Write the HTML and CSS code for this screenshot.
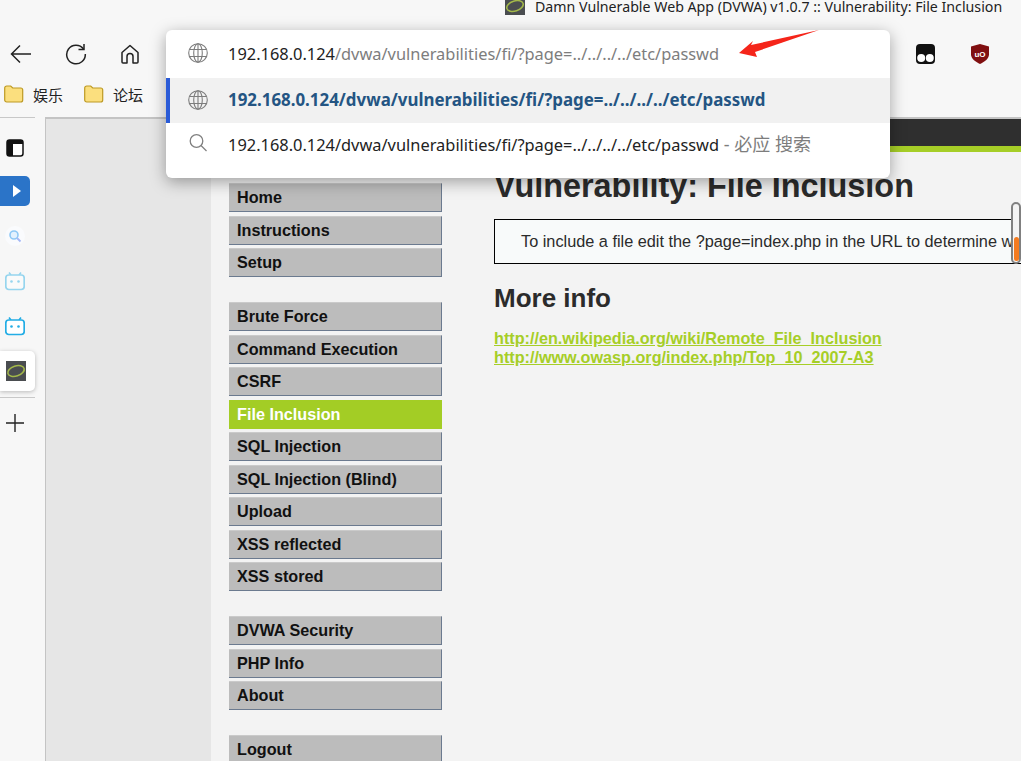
FILE: index.html
```html
<!DOCTYPE html>
<html>
<head>
<title>Damn Vulnerable Web App (DVWA) v1.0.7 :: Vulnerability: File Inclusion</title>
<link rel="stylesheet" href="styles.css">
</head>
<body>

  <div class="titlebar">
    <svg class="favicon-small" width="20" height="15" viewBox="0 5 20 15"><rect width="20" height="20" fill="#4a4d50"/><ellipse cx="10" cy="11" rx="8.5" ry="5" transform="rotate(-18 10 11)" fill="none" stroke="#a3b84a" stroke-width="1.6"/></svg>
    <span class="title-text">Damn Vulnerable Web App (DVWA) v1.0.7 :: Vulnerability: File Inclusion</span>
  </div>

  <div class="toolbar">
    <div class="nav-icons">
      <svg width="22" height="22" viewBox="0 0 22 22" fill="none" stroke="#222" stroke-width="1.5"><path d="M21 11H1.5M10 2.5L1.5 11l8.5 8.5"/></svg>
      <svg width="22" height="22" viewBox="0 0 22 22" fill="none" stroke="#222" stroke-width="1.5"><path d="M18.5 6A9.3 9.3 0 1 0 20.3 11"/><path d="M19 1v5.5h-5.5"/></svg>
      <svg width="20" height="20" viewBox="0 0 20 20" fill="none" stroke="#222" stroke-width="1.5" stroke-linejoin="round"><path d="M2 8.500L10 1.500l8 7V18a1 1 0 0 1-1 1h-4v-6.500a3 3 0 0 0-6 0V19H3a1 1 0 0 1-1-1z"/></svg>
    </div>
    <div class="ext-icons">
      <svg width="19" height="20" viewBox="0 0 19 20"><rect width="19" height="20" rx="4" fill="#111"/><circle cx="5.2" cy="14" r="4" fill="#fff"/><circle cx="13.8" cy="14" r="4" fill="#fff"/></svg>
      <svg width="18" height="20" viewBox="0 0 18 20"><path d="M9 0l9 2.500v8C18 15 13 18 9 20 5 18 0 15 0 10.500v-8z" fill="#800f10"/><text x="9" y="12.500" class="ublock-text" text-anchor="middle">uO</text></svg>
    </div>
  </div>

  <div class="bookmarks">
    <div class="bookmark">
      <svg width="20" height="18" viewBox="0 0 20 18"><path d="M.7 3a2 2 0 0 1 2-2h4l2 2h8a2 2 0 0 1 2 2v10a2 2 0 0 1-2 2H2.700a2 2 0 0 1-2-2z" fill="#fbdf7e" stroke="#bd9a24" stroke-width="1.2"/></svg>
      <span>娱乐</span>
    </div>
    <div class="bookmark">
      <svg width="20" height="18" viewBox="0 0 20 18"><path d="M.7 3a2 2 0 0 1 2-2h4l2 2h8a2 2 0 0 1 2 2v10a2 2 0 0 1-2 2H2.700a2 2 0 0 1-2-2z" fill="#fbdf7e" stroke="#bd9a24" stroke-width="1.2"/></svg>
      <span>论坛</span>
    </div>
  </div>

  <div class="main">
    <div class="sidebar">
      <div class="side-rule"></div>
      <div class="side-item panel-item">
        <svg width="18" height="18" viewBox="0 0 18 18"><rect x="1" y="1" width="16" height="16" rx="2.5" fill="#fff" stroke="#111" stroke-width="1.5"/><path d="M1 2.500A1.500 1.500 0 0 1 2.500 1h13A1.500 1.500 0 0 1 17 2.500V5H7v12H2.500A1.500 1.500 0 0 1 1 15.500z" fill="#111"/></svg>
      </div>
      <div class="side-item blue-item"><span class="play"></span></div>
      <div class="side-item">
        <svg width="20" height="20" viewBox="0 0 20 20"><circle cx="10" cy="10" r="10" fill="#fafbfd"/><circle cx="9" cy="9" r="4" fill="#e3f1fd" stroke="#8ec8f5" stroke-width="1.6"/><path d="M12 12l3.500 3.500" stroke="#a5b8f5" stroke-width="1.8"/></svg>
      </div>
      <div class="side-item">
        <svg width="20" height="20" viewBox="0 0 20 20" opacity=".45"><path d="M6 4L4 1.500M14 4l2-2.500" stroke="#23ade5" stroke-width="1.6"/><rect x=".8" y="4" width="18.4" height="14.5" rx="3" fill="#fff" stroke="#23ade5" stroke-width="1.7"/><circle cx="6.5" cy="10.5" r="1.3" fill="#23ade5"/><circle cx="13.5" cy="10.5" r="1.3" fill="#23ade5"/></svg>
      </div>
      <div class="side-item bili-item">
        <svg width="20" height="20" viewBox="0 0 20 20"><path d="M6 4L4 1.500M14 4l2-2.500" stroke="#23ade5" stroke-width="1.6"/><rect x=".8" y="4" width="18.4" height="14.5" rx="3" fill="#fff" stroke="#23ade5" stroke-width="1.7"/><circle cx="6.5" cy="10.5" r="1.3" fill="#23ade5"/><circle cx="13.5" cy="10.5" r="1.3" fill="#23ade5"/></svg>
      </div>
      <div class="side-tab">
        <svg width="20" height="20" viewBox="0 0 20 20"><rect width="20" height="20" fill="#4a4d50"/><ellipse cx="10" cy="10" rx="8.5" ry="5" transform="rotate(-18 10 10)" fill="none" stroke="#a3b84a" stroke-width="1.6"/></svg>
      </div>
      <div class="side-sep"></div>
      <div class="side-item">
        <svg width="18" height="18" viewBox="0 0 18 18" stroke="#222" stroke-width="1.4"><path d="M0 9h18M9 0v18"/></svg>
      </div>
    </div>

    <div class="content">
      <div class="gutter"></div>
      <div class="page">
        <div class="page-header"></div>
        <div class="page-body">
          <div class="menu">
            <ul class="menu-block">
              <li>Home</li>
              <li>Instructions</li>
              <li>Setup</li>
            </ul>
            <ul class="menu-block">
              <li>Brute Force</li>
              <li>Command Execution</li>
              <li>CSRF</li>
              <li class="selected">File Inclusion</li>
              <li>SQL Injection</li>
              <li>SQL Injection (Blind)</li>
              <li>Upload</li>
              <li>XSS reflected</li>
              <li>XSS stored</li>
            </ul>
            <ul class="menu-block">
              <li>DVWA Security</li>
              <li>PHP Info</li>
              <li>About</li>
            </ul>
            <ul class="menu-block">
              <li>Logout</li>
            </ul>
          </div>
          <div class="body-text">
            <h1>Vulnerability: File Inclusion</h1>
            <div class="vulnerable-code">To include a file edit the ?page=index.php in the URL to determine which file is included.</div>
            <h2>More info</h2>
            <ul class="links">
              <li><a href="#">http://en.wikipedia.org/wiki/Remote_File_Inclusion</a></li>
              <li><a href="#">http://www.owasp.org/index.php/Top_10_2007-A3</a></li>
            </ul>
          </div>
        </div>
      </div>
    </div>
  </div>

  <!-- address bar suggestions, sits over the page -->
  <div class="omnibox">
    <div class="suggestion">
      <svg width="20" height="20" viewBox="0 0 20 20" fill="none" stroke="#7d7d7d" stroke-width="1.1"><circle cx="10" cy="10" r="9.3"/><ellipse cx="10" cy="10" rx="4.3" ry="9.3"/><path d="M10 .7v18.600M1.500 6.500h17M1.500 13.500h17"/></svg>
      <span>192.168.0.124<span class="muted">/dvwa/vulnerabilities/fi/?page=../../../../etc/passwd</span></span>
    </div>
    <div class="suggestion active">
      <svg width="20" height="20" viewBox="0 0 20 20" fill="none" stroke="#7d7d7d" stroke-width="1.1"><circle cx="10" cy="10" r="9.3"/><ellipse cx="10" cy="10" rx="4.3" ry="9.3"/><path d="M10 .7v18.600M1.500 6.500h17M1.500 13.500h17"/></svg>
      <span>192.168.0.124/dvwa/vulnerabilities/fi/?page=../../../../etc/passwd</span>
    </div>
    <div class="suggestion last">
      <svg width="20" height="20" viewBox="0 0 20 20" fill="none" stroke="#808080" stroke-width="1.3"><circle cx="8.5" cy="8" r="6.3"/><path d="M13 12.500l5.500 5.500"/></svg>
      <span>192.168.0.124/dvwa/vulnerabilities/fi/?page=../../../../etc/passwd<span class="muted engine"> - 必应 搜索</span></span>
    </div>
  </div>

  <svg class="red-arrow" width="90" height="32" viewBox="0 0 90 32"><polygon points="9,23 23,11 21,15 89,0 25,22 27,27" fill="#f5251a"/></svg>

  <div class="scroll-thumb"><div class="scroll-fill"></div></div>

</body>
</html>
```

FILE: styles.css
```css
html, body {
  margin: 0;
  height: 761px;
  overflow: hidden;
}

body {
  position: relative;
  background: #f7f7f7;
  font-family: "Noto Sans", "Noto Sans CJK SC", sans-serif;
  color: #222;
  display: flex;
  flex-direction: column;
}

.titlebar {
  height: 18px;
  padding-left: 505px;
  display: flex;
  align-items: flex-start;
  gap: 10px;
  flex-shrink: 0;
}

.title-text {
  font-size: 14.2px;
  line-height: 14px;
  white-space: nowrap;
}

.toolbar {
  height: 57px;
  box-sizing: border-box;
  display: flex;
  align-items: center;
  justify-content: space-between;
  padding: 14px 32px 0 10px;
  flex-shrink: 0;
}

.nav-icons {
  display: flex;
  align-items: center;
  gap: 33px;
}

.ext-icons {
  display: flex;
  align-items: center;
  gap: 36px;
}

.ublock-text {
  font: bold 8px "Liberation Sans", sans-serif;
  fill: #fff;
}

.bookmarks {
  height: 42px;
  box-sizing: border-box;
  display: flex;
  align-items: center;
  gap: 21px;
  padding: 0 0 4px 4px;
  font-size: 15px;
  flex-shrink: 0;
}

.bookmark {
  display: flex;
  align-items: center;
  gap: 9px;
}

.main {
  flex: 1;
  display: flex;
  min-height: 0;
}

.sidebar {
  width: 45px;
  flex-shrink: 0;
  display: flex;
  flex-direction: column;
}

.side-rule {
  width: 35px;
  height: 1px;
  background: #c8c8c8;
  margin-bottom: 15px;
}

.side-item {
  width: 30px;
  height: 30px;
  margin-bottom: 15px;
  display: flex;
  align-items: center;
  justify-content: center;
}

.panel-item {
  margin-bottom: 13px;
}

.blue-item {
  background: #2b74c8;
  border-radius: 0 5px 5px 0;
}

.play {
  width: 0;
  height: 0;
  border-left: 8px solid #fff;
  border-top: 6px solid transparent;
  border-bottom: 6px solid transparent;
  margin-left: 3px;
}

.bili-item {
  margin-bottom: 10px;
}

.side-tab {
  width: 35px;
  height: 40px;
  background: #fff;
  border-radius: 0 5px 5px 0;
  box-shadow: 0 1px 4px rgba(0, 0, 0, 0.25);
  display: flex;
  align-items: center;
  padding-left: 6px;
  box-sizing: border-box;
  margin-bottom: 6px;
}

.side-sep {
  width: 35px;
  height: 1px;
  background: #c8c8c8;
  margin-bottom: 10px;
}

.content {
  flex: 1;
  display: flex;
  min-width: 0;
  border-top: 2px solid #c4c4c4;
  border-left: 1px solid #c4c4c4;
}

.gutter {
  width: 165px;
  background: #e6e6e6;
  flex-shrink: 0;
}

.page {
  flex: 1;
  min-width: 0;
  background: #f3f3f3;
  overflow: hidden;
}

.page-header {
  height: 27px;
  background: #2f2f2f;
  border-bottom: 6px solid #a6ce27;
}

.page-body {
  display: flex;
  padding: 31px 0 0 18px;
}

.menu {
  width: 213px;
  flex-shrink: 0;
}

.menu-block {
  list-style: none;
  margin: 0 0 25px;
  padding: 0;
}

.menu-block li {
  height: 29px;
  margin-bottom: 3.5px;
  padding-left: 8px;
  box-sizing: border-box;
  background: #bcbcbc;
  border-top: 1px solid #cacaca;
  border-right: 1px solid #6b7a8f;
  border-bottom: 1px solid #6b7a8f;
  font: bold 16.2px/27px "Liberation Sans", Arial, sans-serif;
  color: #111;
}

.menu-block li.selected {
  background: #a3cd25;
  border-color: #a3cd25;
  color: #fff;
}

.body-text {
  margin-left: 52px;
  width: 600px;
  flex-shrink: 0;
  font-family: "Liberation Sans", Arial, sans-serif;
  color: #2b2b2b;
}

h1 {
  font-size: 32.4px;
  line-height: 36px;
  margin: -15px 0 15px;
}

.vulnerable-code {
  height: 45px;
  line-height: 43px;
  box-sizing: border-box;
  border: 1px solid #000;
  border-right: 0;
  background: #f8fafa;
  padding-left: 26px;
  font-size: 16.3px;
  white-space: nowrap;
}

h2 {
  font-size: 26px;
  line-height: 30px;
  margin: 19px 0 16px;
}

.links {
  list-style: none;
  margin: 0;
  padding: 0;
  font-size: 16.2px;
  font-weight: bold;
  line-height: 19.4px;
}

.links a {
  color: #a6ce27;
}

.omnibox {
  position: absolute;
  left: 166px;
  top: 30px;
  width: 724px;
  height: 148px;
  background: #fff;
  border-radius: 6px;
  box-shadow: 0 4px 16px rgba(0, 0, 0, 0.35);
  overflow: hidden;
  font-size: 16.4px;
}

.suggestion {
  height: 48px;
  box-sizing: border-box;
  display: flex;
  align-items: center;
  padding: 0 0 2px 22px;
  gap: 20px;
  color: #222;
  white-space: nowrap;
}

.suggestion.active {
  height: 45px;
  background: #f1f1f1;
  border-left: 4px solid #2a5bd7;
  padding: 0 0 2px 18px;
  font-size: 16.9px;
  font-weight: bold;
  color: #245583;
}

.suggestion.last {
  height: 44px;
  padding-bottom: 4px;
}

.muted {
  color: #7d7d7d;
}

.engine {
  font-size: 18px;
}

.red-arrow {
  position: absolute;
  left: 730px;
  top: 30px;
}

.scroll-thumb {
  position: absolute;
  left: 1011px;
  top: 202px;
  width: 10px;
  height: 62px;
  box-sizing: border-box;
  border: 2px solid #808080;
  border-radius: 5px;
  background: #f3f3f3;
}

.scroll-fill {
  position: absolute;
  left: 1px;
  right: 0;
  top: 33px;
  bottom: 1px;
  background: #f47b20;
  border-radius: 3px;
}
```
